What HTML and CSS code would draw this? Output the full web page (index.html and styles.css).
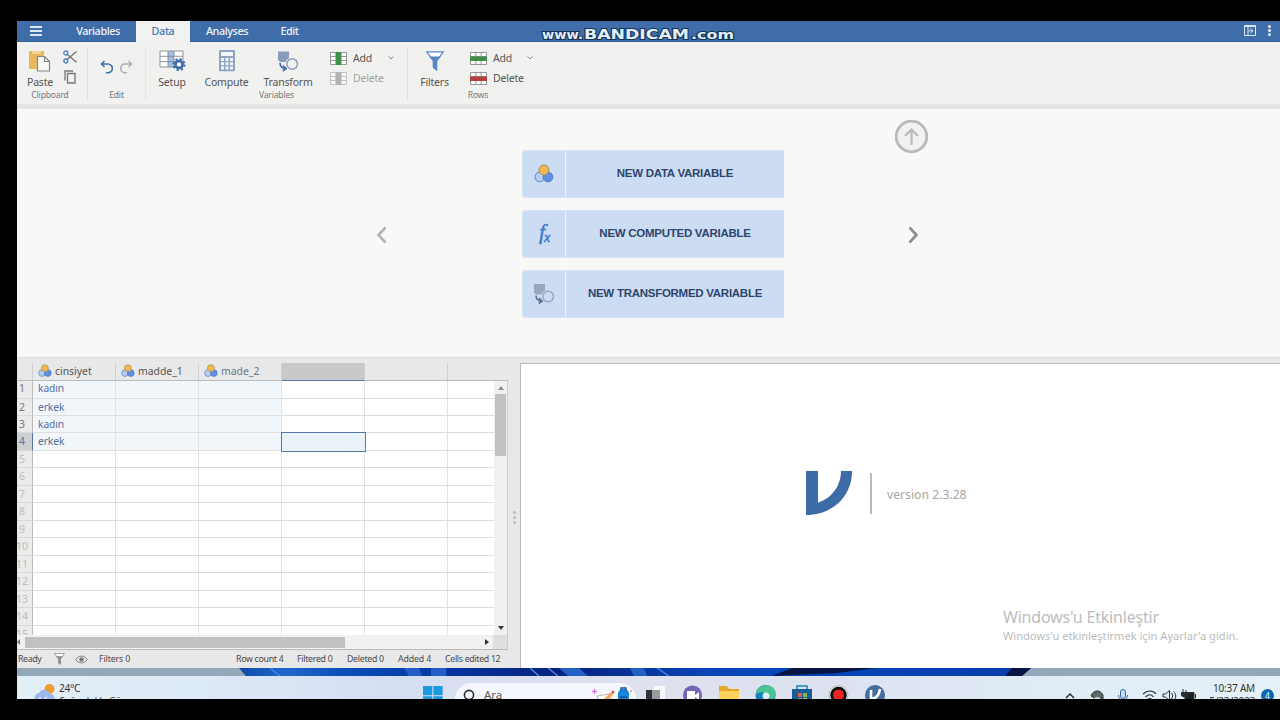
FILE: index.html
```html
<!DOCTYPE html>
<html lang="tr">
<head>
<meta charset="utf-8">
<title>jamovi</title>
<link rel="stylesheet" href="styles.css">
</head>
<body>
<svg width="0" height="0" class="defs">
  <defs>
    <symbol id="nominal" viewBox="0 0 20 20">
      <circle cx="5.8" cy="13" r="4.8" fill="#b5cdf2" stroke="#5a83c4"/>
      <circle cx="14" cy="13" r="4.8" fill="#5d8fe3" stroke="#4878c4"/>
      <circle cx="9.9" cy="6" r="5" fill="#f3b751" stroke="#a78b62"/>
    </symbol>
    <symbol id="transform" viewBox="0 0 22 21">
      <path d="M1 1h11v6.5a7 7 0 0 0-3.5 4H3L1 9.500z" fill="currentColor" stroke="none"/>
      <circle cx="15.200" cy="13.500" r="5.300" fill="none" stroke="currentColor" stroke-width="1.500"/>
      <path d="M3 12.500c.3 3.300 1.800 5.300 5 5.600M6 15.200l3 3-3.200 2.300" fill="none" stroke-width="1.700"/>
    </symbol>
    <symbol id="sheet" viewBox="0 0 17 13">
      <path d="M.5.5h16v12H.5zM.5 4.500h16M.5 8.500h16M5.800.5v12M11.200.5v12" fill="#fff" stroke="#8b8b8b" stroke-width=".9"/>
    </symbol>
    <symbol id="funnel" viewBox="0 0 18 20">
      <path d="M.8.8h16.400L10.700 10v9l-3.400-2.500V10z" fill="#fff" stroke="currentColor" stroke-width="1.200"/>
      <path d="M3 5.500h12L10.700 10v9l-3.400-2.500V10z" fill="currentColor"/>
    </symbol>
  </defs>
</svg>
<div class="screen">
  <header class="tabs">
    <div class="burger"><i></i><i></i><i></i></div>
    <div class="tab t-var">Variables</div>
    <div class="tab t-data active">Data</div>
    <div class="tab t-ana">Analyses</div>
    <div class="tab t-edit">Edit</div>
    <svg class="brand" width="202" height="20" viewBox="0 0 202 20">
      <g class="brandtext">
        <text x="5" y="16" font-size="11.500" textLength="41" lengthAdjust="spacingAndGlyphs">www.</text>
        <text x="47" y="16" font-size="14" textLength="105" lengthAdjust="spacingAndGlyphs">BANDICAM</text>
        <text x="154" y="16" font-size="11.500" textLength="43" lengthAdjust="spacingAndGlyphs">.com</text>
      </g>
    </svg>
    <svg class="dock" width="12" height="11" viewBox="0 0 12 11"><path d="M.5.5h11v10H.5zM.5 1.500h11M4 1v9M6.500 3.500L9 5.800 6.500 8M4.500 5.800H9" fill="none" stroke="#dce8f6"/></svg>
    <div class="dots"><i></i><i></i><i></i></div>
  </header>

  <section class="ribbon">
    <div class="group g-clip">
      <div class="tools">
        <div class="big w-paste">
          <svg width="22" height="22" viewBox="0 0 22 22"><path d="M0 1h15v18H0z" fill="#e9b85c"/><path d="M3 1h9v3H3z" fill="#f4d596"/><path d="M8.500 6.500h7l5 5v9.500h-12zM15.500 6.500v5h5" fill="#f7f7f7" stroke="#858585" stroke-width="1.200"/></svg>
          <span>Paste</span>
        </div>
        <div class="stack">
          <svg width="14" height="14" viewBox="0 0 14 14" fill="none"><path d="M13.500 1.500L4.300 9.200M4.300 4.500l9.200 7.700" stroke="#777" stroke-width="1.400"/><circle cx="2.800" cy="3" r="2" stroke="#4d80be" stroke-width="1.300"/><circle cx="2.800" cy="11" r="2" stroke="#4d80be" stroke-width="1.300"/></svg>
          <svg width="12" height="14" viewBox="0 0 12 14" fill="none" stroke="#777" stroke-width="1.300"><path d="M3.500 3.500h7.500v9.500H3.500z"/><path d="M1 10.500V1h8"/></svg>
        </div>
      </div>
      <div class="caption">Clipboard</div>
    </div>
    <div class="group g-edit">
      <div class="tools undo">
        <svg width="13" height="14" viewBox="0 0 13 14" fill="none" stroke="#416fae" stroke-width="1.600"><path d="M1.500 4H8a4.300 4.300 0 0 1 0 8.700H6M4.500 1l-3 3 3 3"/></svg>
        <svg width="13" height="14" viewBox="0 0 13 14" fill="none" stroke="#b0b0b0" stroke-width="1.500"><path d="M11.500 4H5a4.300 4.300 0 0 0 0 8.700h2M8.500 1l3 3-3 3"/></svg>
      </div>
      <div class="caption">Edit</div>
    </div>
    <div class="group g-vars">
      <div class="tools">
        <div class="big w-setup">
          <svg width="27" height="22" viewBox="0 0 27 22"><path d="M1 1h23v16H1z" fill="#fff"/><path d="M9 1h6v16H9z" fill="#9fbef0"/><path d="M1 1h23v16H1zM1 6.300h23M1 11.600h23M9 1v16M15 1v16" fill="none" stroke="#888" stroke-width=".9"/><circle cx="20" cy="14.500" r="3.500" fill="none" stroke="#3f6cab" stroke-width="2.600"/><circle cx="20" cy="14.500" r="5.500" fill="none" stroke="#3f6cab" stroke-width="2" stroke-dasharray="2.200 2.120"/><circle cx="20" cy="14.500" r="1.700" fill="#fff"/></svg>
          <span>Setup</span>
        </div>
        <div class="big w-comp">
          <svg width="16" height="22" viewBox="0 0 16 22"><path d="M.7.7h14.600v20H.7z" fill="#92a5c6" stroke="#7f96bd"/><path d="M2 2h12v4H2zM2 8h3v3H2zM6.500 8h3v3h-3zM11 8h3v3h-3zM2 12.300h3v3H2zM6.500 12.300h3v3h-3zM11 12.300h3v3h-3zM2 16.500h3v3H2zM6.500 16.500h3v3h-3zM11 16.500h3v3h-3z" fill="#f4f6fa"/></svg>
          <span>Compute</span>
        </div>
        <div class="big w-trans">
          <svg class="tr-blue" width="22" height="22"><use href="#transform"/></svg>
          <span>Transform</span>
        </div>
        <div class="list">
          <div class="small"><svg width="17" height="13"><use href="#sheet"/><path d="M6 0h5v13H6z" fill="#3e8f47"/></svg><span>Add</span><svg class="caret" width="6" height="4" viewBox="0 0 6 4"><path d="M.5.5L3 3 5.500.5" fill="none" stroke="#888"/></svg></div>
          <div class="small off"><svg width="17" height="13"><use href="#sheet"/><path d="M6 0h5v13H6z" fill="#777"/></svg><span>Delete</span></div>
        </div>
      </div>
      <div class="caption">Variables</div>
    </div>
    <div class="group g-rows">
      <div class="tools">
        <div class="big w-filt">
          <svg class="f-blue" width="18" height="22"><use href="#funnel"/></svg>
          <span>Filters</span>
        </div>
        <div class="list">
          <div class="small"><svg width="17" height="13"><use href="#sheet"/><path d="M0 4.500h17v4.500H0z" fill="#3e8f47"/></svg><span>Add</span><svg class="caret" width="6" height="4" viewBox="0 0 6 4"><path d="M.5.5L3 3 5.500.5" fill="none" stroke="#888"/></svg></div>
          <div class="small"><svg width="17" height="13"><use href="#sheet"/><path d="M0 4.500h17v4.500H0z" fill="#b5403f"/></svg><span>Delete</span></div>
        </div>
      </div>
      <div class="caption">Rows</div>
    </div>
  </section>

  <section class="panel">
    <svg class="prev" width="12" height="18" viewBox="0 0 12 18"><path d="M9.500 1.500L2.500 9l7 7.500" fill="none" stroke="#b3b3b3" stroke-width="2.600"/></svg>
    <div class="choices">
      <div class="choice"><div class="pic"><svg width="20" height="20"><use href="#nominal"/></svg></div><div class="name"><span>NEW DATA VARIABLE</span></div></div>
      <div class="choice"><div class="pic fx"><svg width="18" height="28" viewBox="0 0 18 28"><text x="4" y="19" font-size="22">f</text><text x="9" y="22" font-size="14">x</text></svg></div><div class="name"><span>NEW COMPUTED VARIABLE</span></div></div>
      <div class="choice"><div class="pic tr-gray"><svg width="22" height="21"><use href="#transform"/></svg></div><div class="name"><span>NEW TRANSFORMED VARIABLE</span></div></div>
    </div>
    <div class="side">
      <svg width="34" height="34" viewBox="0 0 34 34" fill="none" stroke="#b9b9b9"><circle cx="16.500" cy="16.500" r="15.300" fill="#f1f1f1" stroke-width="2.800"/><path d="M16.500 25V9.500M10 16l6.500-6.500L23 16" stroke-width="2.200"/></svg>
      <svg class="next" width="12" height="18" viewBox="0 0 12 18"><path d="M2.500 1.500L9.500 9l-7 7.500" fill="none" stroke="#8e8e8e" stroke-width="2.600"/></svg>
    </div>
  </section>

  <section class="work">
    <div class="data">
      <div class="heads">
        <div class="corner"></div>
        <div class="head"><svg width="14" height="14"><use href="#nominal"/></svg>cinsiyet</div>
        <div class="head"><svg width="14" height="14"><use href="#nominal"/></svg>madde_1</div>
        <div class="head made"><svg width="14" height="14"><use href="#nominal"/></svg>made_2</div>
        <div class="head sel"></div>
        <div class="head"></div>
        <div class="head last"></div>
      </div>
      <div class="body">
        <div class="cells">
          <div class="row full first"><b>1</b><i>kadın</i><i></i><i></i><i></i><i></i></div>
          <div class="row full"><b>2</b><i>erkek</i><i></i><i></i><i></i><i></i></div>
          <div class="row full"><b>3</b><i>kadın</i><i></i><i></i><i></i><i></i></div>
          <div class="row full current"><b>4</b><i>erkek</i><i></i><i></i><i class="cursor"></i><i></i></div>
          <div class="row"><b>5</b><i></i><i></i><i></i><i></i><i></i></div>
          <div class="row"><b>6</b><i></i><i></i><i></i><i></i><i></i></div>
          <div class="row"><b>7</b><i></i><i></i><i></i><i></i><i></i></div>
          <div class="row"><b>8</b><i></i><i></i><i></i><i></i><i></i></div>
          <div class="row"><b>9</b><i></i><i></i><i></i><i></i><i></i></div>
          <div class="row"><b>10</b><i></i><i></i><i></i><i></i><i></i></div>
          <div class="row"><b>11</b><i></i><i></i><i></i><i></i><i></i></div>
          <div class="row"><b>12</b><i></i><i></i><i></i><i></i><i></i></div>
          <div class="row"><b>13</b><i></i><i></i><i></i><i></i><i></i></div>
          <div class="row"><b>14</b><i></i><i></i><i></i><i></i><i></i></div>
          <div class="row"><b>15</b><i></i><i></i><i></i><i></i><i></i></div>
        </div>
        <div class="vbar">
          <svg width="6" height="4" viewBox="0 0 6 4"><path d="M0 4l3-4 3 4z" fill="#8a8a8a"/></svg>
          <div class="vthumb"></div>
          <svg width="6" height="4" viewBox="0 0 6 4"><path d="M0 0l3 4 3-4z" fill="#333"/></svg>
        </div>
      </div>
      <div class="hbar">
        <svg width="4" height="6" viewBox="0 0 4 6"><path d="M3 0v6L0 3z" fill="#777"/></svg>
        <div class="hthumb"></div>
        <svg class="right" width="4" height="6" viewBox="0 0 4 6"><path d="M0 0v6l4-3z" fill="#333"/></svg>
        <div class="hcorner"></div>
      </div>
      <div class="status">
        <span class="s-ready">Ready</span>
        <svg class="s-fun" width="11" height="12" viewBox="0 0 18 20"><use href="#funnel"/></svg>
        <svg class="s-eye" width="13" height="9" viewBox="0 0 13 9"><path d="M.7 4.500C3.500 0 9.500 0 12.300 4.500 9.500 9 3.500 9 .7 4.500z" fill="none" stroke="#858585"/><circle cx="6.500" cy="4.500" r="2.200" fill="#777"/></svg>
        <span class="s-filters">Filters 0</span>
        <span class="s-rows">Row count 4</span>
        <span class="s-filtered">Filtered 0</span>
        <span class="s-deleted">Deleted 0</span>
        <span class="s-added">Added 4</span>
        <span class="s-cells">Cells edited 12</span>
      </div>
      <div class="grip"><i></i><i></i><i></i></div>
    </div>
    <div class="results">
      <div class="about">
        <svg width="47" height="45" viewBox="0 0 47 45"><path d="M0 0h12v31.500C25 28 35 15 35 0h11C46 26 26 44 0 44z" fill="#3c6ba6"/></svg>
        <div class="rule"></div>
        <span>version 2.3.28</span>
      </div>
      <div class="activate">
        <div class="a1"><span>Windows'u Etkinleştir</span></div>
        <div class="a2"><span>Windows'u etkinleştirmek için Ayarlar'a gidin.</span></div>
      </div>
    </div>
  </section>

  <svg class="wall" width="1264" height="8" viewBox="0 0 1264 8">
    <defs><linearGradient id="sky"><stop offset="0" stop-color="#0d49a8"/><stop offset=".06" stop-color="#2068cb"/><stop offset=".13" stop-color="#0850b8"/><stop offset=".24" stop-color="#0639a8"/><stop offset=".4" stop-color="#06207d"/><stop offset=".58" stop-color="#0a43b4"/><stop offset=".7" stop-color="#0546bd"/><stop offset="1" stop-color="#0b3cab"/></linearGradient></defs>
    <path d="M0 0h1264v8H0z" fill="#93a8b8"/>
    <path d="M222 0h792l-9 8H229z" fill="url(#sky)"/>
    <path d="M253 0l10 8M513 0l9 8M531 0l10 8M640 0l12 8" stroke="#4389e1" stroke-width="1.500"/>
    <path d="M387 0h15l3 8h-13zM414 0h15v8h-15zM542 0h20l9 8h-20zM613 0h14l3 8h-13z" fill="#245fc5"/>
    <path d="M775 0h85l-40 5-65 3z" fill="#06153f"/>
    <path d="M995 0h19l-9 8h-17z" fill="#071544"/>
  </svg>

  <footer class="taskbar">
    <svg class="weather" width="22" height="16" viewBox="0 0 22 16"><circle cx="15.500" cy="5" r="5" fill="#f29a2e"/><path d="M1 16a5 5 0 0 1 4-7 6 6 0 0 1 11 1 4 4 0 0 1 4 6z" fill="#9db9ec"/><path d="M5 16l1.500-3M11 16l1.500-3" stroke="#e8f1ff" stroke-width="1.500"/></svg>
    <div class="temp"><div class="deg">24°C</div><div class="cond">Çoğunlukla Güneş</div></div>
    <svg class="start" width="20" height="20" viewBox="0 0 20 20"><path d="M0 0h9.300v9.300H0zM10.300 0h9.300v9.300h-9.300zM0 10.300h9.300V20H0zM10.300 10.300h9.300V20h-9.300z" fill="#199ae2"/></svg>
    <div class="search">
      <svg class="lens" width="14" height="17" viewBox="0 0 14 17"><circle cx="7" cy="6" r="4.600" fill="none" stroke="#252a32" stroke-width="1.600"/><path d="M10 10l3.500 4" stroke="#252a32" stroke-width="1.600"/></svg>
      <span>Ara</span>
      <svg class="art" width="40" height="16" viewBox="0 0 40 16"><path d="M2.500 2v5M0 4.500h5" stroke="#d77bdd" stroke-width="1.300"/><path d="M5 9l12-2 4 9H8z" fill="#fff8ed" stroke="#aaa" stroke-width=".8"/><path d="M12 12l7-7 3 1-6 7z" fill="#eda55e"/><path d="M20 4l2 2" stroke="#dc4c55" stroke-width="2"/><rect x="26" y="2" width="11" height="14" rx="5" fill="#1786dd"/><path d="M29 4V1h5v3M28 10h7" fill="none" stroke="#0c5399" stroke-width="1.300"/><circle cx="39" cy="4" r="1" fill="#ed9b58"/></svg>
    </div>
    <svg class="apps" width="242" height="20" viewBox="0 0 242 20">
      <path d="M8 1h11v14H8z" fill="#f7f8f9"/><path d="M0 5h14v15H0z" fill="#303136"/><path d="M6 5h8v15H6z" fill="#999"/>
      <circle cx="46.500" cy="10" r="9.500" fill="#7165b5"/><path d="M41 6h8v9h-8zM49 10l4-3v8l-4-3z" fill="#fff"/>
      <path d="M73 1h8l2 3h10v16H73z" fill="#e7a827"/><path d="M73 6h20v14H73z" fill="#ffd35b"/>
      <circle cx="119.500" cy="10" r="10" fill="#157fc4"/><path d="M110 9c1-11 19-12 20 0 0 5-5 6-8 4 1-4-5-8-12-4z" fill="#4bc58f"/><circle cx="120" cy="11" r="3.500" fill="#d7f2fb"/>
      <path d="M151 5V1h10v4" fill="none" stroke="#1a85bb" stroke-width="1.500"/><path d="M146 4h20v16h-20z" fill="#195d96"/><path d="M152 8h4v4h-4z" fill="#ed5b37"/><path d="M157 8h4v4h-4z" fill="#7bbd4b"/><path d="M152 13h4v4h-4z" fill="#3fa9e2"/><path d="M157 13h4v4h-4z" fill="#f2c444"/>
      <circle cx="192.500" cy="10" r="9.500" fill="#ececec" stroke="#b9b9b9"/><circle cx="192.500" cy="10" r="8.200" fill="#0b0b0b"/><circle cx="192.500" cy="10" r="5.500" fill="#ea2524"/>
      <circle cx="229" cy="10" r="10" fill="#426f9f"/><path d="M225 5v9c5 0 8-4 9-10" fill="none" stroke="#fff" stroke-width="2.600"/>
    </svg>
    <svg class="tray" width="132" height="16" viewBox="0 0 132 16" fill="none" stroke="#2a2f36">
      <path d="M1 10l4-4 4 4" stroke-width="1.500"/>
      <path d="M26 8c2-6 9-7 12-1v4l-4-2-3 3-3-3z" fill="#60686a"/><path d="M28 12c1-4 7-4 8-1v4h-8z" fill="#e3e6df" stroke="#777"/>
      <rect x="55.500" y="1.500" width="5" height="9" rx="2.500" fill="#c8dbf5" stroke="#3768aa"/><path d="M53.500 7c0 7 9 7 9 0M58 13v3" stroke="#3768aa"/>
      <path d="M78 6c4-4 10-4 13 0M80.500 9c3-3 6-3 8 0M82.500 11.500c1.500-1 3-1 4 0" stroke-width="1.200"/>
      <path d="M98 6h2.500l4-3.500v10l-4-3.500H98zM106.500 5c1.500 1.500 1.500 4 0 6M108.500 3.500c3 2.500 3 6.500 0 9"/>
      <path d="M120 4.500h9v7h-9z" fill="#222"/><path d="M130.500 6v4M118 1v4M121 2v3M116.500 4.500h6v3c0 2-5 2-6 0z" fill="#2a2f36"/>
    </svg>
    <div class="clock"><div>10:37 AM</div><div class="date">5/23/2023</div></div>
    <div class="badge">4</div>
  </footer>
</div>
</body>
</html>
```
FILE: styles.css
```css
* { box-sizing: border-box; }
body { margin: 0; width: 1280px; height: 720px; overflow: hidden; background: #000; padding: 21px 0 0 17px; font-family: "Noto Sans", "Open Sans", sans-serif; font-size: 10.5px; color: #555; }
.defs { display: block; }
.screen { width: 1263px; height: 678px; overflow: hidden; background: #e8e8e8; display: flex; flex-direction: column; }
svg { display: block; flex: none; }
span { white-space: nowrap; }

.tabs { height: 21px; flex: none; background: #3e6da9; color: #eef4fb; display: flex; align-items: center; font-weight: 500; border-bottom: 1px solid #356199; }
.burger { width: 38px; flex: none; padding-left: 13px; display: flex; flex-direction: column; gap: 2px; }
.burger i { width: 12px; height: 2px; background: #dce7f4; }
.tab { height: 21px; flex: none; line-height: 20px; text-align: center; font-size: 10.8px; letter-spacing: -.4px; }
.t-var { width: 81px; padding-left: 5px; }
.t-data { width: 54px; }
.t-ana { width: 74px; }
.t-edit { width: 51px; }
.active { background: #f2f2f2; color: #4c74ab; }
.brand { margin-left: 222px; margin-top: 3px; }
.brandtext { font-family: "DejaVu Sans", sans-serif; font-weight: bold; fill: #e2effa; stroke: #153456; stroke-width: 2px; paint-order: stroke; }
.dock { margin-left: 505px; margin-top: -2px; }
.dots { margin-left: 12px; margin-top: -1px; display: flex; flex-direction: column; gap: 1px; }
.dots i { width: 3px; height: 3px; border-radius: 50%; background: #eef4fb; }

.ribbon { height: 62px; flex: none; background: #f1f1f0; display: flex; padding-top: 5px; }
.group { height: 53px; border-right: 1px solid #e2e2e2; }
.group:last-child { border: 0; }
.g-clip { width: 71px; }
.g-edit { width: 58px; }
.g-vars { width: 262px; }
.g-rows { width: 140px; }
.tools { height: 42px; display: flex; }
.caption { font-size: 8.5px; line-height: 12px; text-align: center; color: #777; letter-spacing: -.15px; }
.g-clip .caption { padding-right: 4px; }
.big { height: 42px; padding-top: 3px; display: flex; flex-direction: column; align-items: center; line-height: 14px; gap: 3px; letter-spacing: -.2px; }
.w-paste { width: 46px; }
.w-setup { width: 52px; }
.w-comp { width: 57px; }
.w-trans { width: 66px; }
.w-filt { width: 53px; }
.stack { display: flex; flex-direction: column; gap: 6px; padding-top: 3px; align-items: center; }
.undo { justify-content: center; gap: 7px; padding-top: 13px; }
.tr-blue { color: #8b9cba; stroke: #3f6cab; }
.tr-gray { color: #98a5ba; stroke: #58718f; }
.f-blue { color: #5487c4; }
.list { padding: 1px 0 0 9px; }
.small { height: 20px; display: flex; align-items: center; letter-spacing: -.2px; }
.small span { margin-left: 6px; width: 33px; }
.off { opacity: .5; }
.caret { margin-left: 2px; }
.g-rows .caret { margin-left: 1px; }

.panel { height: 254px; flex: none; background: #f8f8f8; border-top: 5px solid #e6e6e5; border-bottom: 1px solid #ddd; display: grid; grid-template-columns: 359px 146px 262px 111px 34px; }
.prev { grid-column: 2; margin-top: 117px; }
.choices { padding-top: 41px; display: flex; flex-direction: column; gap: 12px; }
.choice { height: 48px; display: grid; grid-template-columns: 43px 218px; border-radius: 3px 0 0 3px; overflow: hidden; background: #ccddf3; border: 1px solid #d7e5f6; border-right: 0; }
.pic { border-right: 1px solid #eaf2fd; display: flex; align-items: center; justify-content: center; padding-bottom: 1px; }
.name { display: flex; align-items: center; justify-content: center; padding-bottom: 2px; font: bold 11.5px "Liberation Sans", sans-serif; letter-spacing: -.27px; color: #2d466e; }
.fx { font-family: "Liberation Serif", serif; font-style: italic; fill: #4279d0; stroke: #4279d0; stroke-width: .5px; }
.side { grid-column: 5; padding-top: 11px; }
.next { margin: 72px 0 0 12px; }

.work { height: 310px; flex: none; display: flex; }
.data { width: 503px; padding-top: 5px; position: relative; }
.heads { height: 18px; display: flex; border-bottom: 1px solid #bbb; width: 491px; }
.corner { width: 16px; border-right: 1px solid #d0d0d0; flex: none; }
.head { width: 83px; flex: none; border-right: 1px solid #d0d0d0; display: flex; align-items: center; gap: 3px; padding-left: 5px; font-size: 10.4px; line-height: 14px; padding-bottom: 1px; color: #555; }
.made { color: #67778c; }
.head.sel { background: #c9c9c9; border-bottom: 1px solid #557ba8; height: 18px; }
.head.last { width: 59px; border: 0; }
.body { height: 254px; display: flex; }
.cells { width: 477px; background: #fff; overflow: hidden; }
.row { height: 17.470px; display: grid; grid-template-columns: 16px 83px 83px 83px 83px 83px 46px; line-height: 16px; }
.row.first { height: 17.500px; line-height: 15px; }
.row b { font-weight: normal; font-size: 10.5px; background: #ebebeb; color: #bcbcbc; border-right: 1px solid #bbb; border-bottom: 1px solid #d8d8d8; padding-right: 5px; display: flex; justify-content: center; }
.row i { font-style: normal; border-right: 1px solid #e3e3e3; border-bottom: 1px solid #dedede; padding-left: 5px; color: #576f9f; font-size: 10.3px; letter-spacing: -.1px; }
.row::after { content: ""; border-bottom: 1px solid #dedede; }
.full b { color: #777; }
.full i:nth-of-type(-n+3) { background: #f1f6fa; }
.current b { background: #ccd0d0; color: #5975a4; border-right: 1px solid #5275a8; }
.current .cursor { background: #ebf3fa; border: 0; outline: 1.500px solid #547aa8; margin: 0 0 0 0; position: relative; }
.vbar { width: 14px; background: #f0f0f0; border-right: 1px solid #ccc; display: flex; flex-direction: column; align-items: center; padding: 5px 0; }
.vthumb { width: 11px; height: 62px; background: #c1c1c1; margin: 4px 0 auto; }
.hbar { width: 491px; height: 15px; background: #f1f1f1; display: flex; align-items: center; border-bottom: 1px solid #bbb; }
.hthumb { width: 320px; height: 11px; background: #c1c1c1; margin-left: 4px; }
.right { margin-left: 140px; }
.hcorner { width: 15px; height: 14px; background: #dedede; margin-left: auto; border-right: 1px solid #ccc; }
.status { height: 18px; display: flex; align-items: center; font-size: 8.8px; letter-spacing: -.15px; color: #4a4a4a; }
.s-ready { width: 36px; padding-left: 1px; letter-spacing: -.4px; }
.s-fun { color: #888; margin-left: 1px; }
.s-eye { margin-left: 10px; }
.s-filters { margin-left: 11px; width: 137px; }
.s-rows { width: 61px; letter-spacing: -.3px; }
.s-filtered { width: 50px; letter-spacing: -.3px; }
.s-deleted { width: 51px; letter-spacing: -.3px; }
.s-added { width: 47px; }
.s-cells { letter-spacing: -.32px; }
.grip { position: absolute; right: 4px; top: 153px; display: flex; flex-direction: column; gap: 2px; }
.grip i { width: 3px; height: 3px; border-radius: 50%; background: #bbb; }
.results { width: 760px; margin-top: 5px; background: #fff; border-left: 1px solid #bbb; border-top: 1px solid #bbb; }
.about { padding: 107px 0 0 285px; display: flex; align-items: center; height: 152px; color: #a5a5a5; font-size: 12.2px; }
.rule { width: 2px; height: 41px; background: #b9b9b9; margin: 0 15px 0 17px; }
.about span { padding-top: 1px; }
.activate { padding: 91px 0 0 482px; color: #bcbcbc; line-height: 20px; }
.a1 { font-size: 16px; letter-spacing: -.2px; height: 20px; }
.a2 { font-size: 11.1px; line-height: 17px; }

.wall { height: 8px; }
.taskbar { height: 23px; flex: none; overflow: hidden; display: flex; align-items: flex-start; background: linear-gradient(90deg, #e3f0f8, #dce9f7 15%, #d5def2 30%, #dfe1ee 50%, #dce2f1 65%, #e1eef7 85%, #e5f0f7); color: #333; }
.weather { margin: 8px 0 0 17px; }
.temp { width: 369px; flex: none; padding-left: 3px; padding-top: 6px; }
.deg { font-size: 10.2px; line-height: 13px; letter-spacing: -.3px; }
.cond { font-size: 9px; line-height: 12px; }
.start { margin: 10px 0 0 -2px; }
.search { width: 181px; flex: none; height: 32px; margin: 7px 0 0 12px; border-radius: 16px; background: #f4f8fe; display: flex; align-items: flex-start; padding-left: 7px; font-size: 11.5px; color: #555; }
.lens { margin-top: 6px; }
.search span { margin: 4px 0 0 8px; }
.art { margin: 4px 0 0 90px; }
.apps { margin: 9px 0 0 10px; }
.tray { margin: 12px 0 0 177px; }
.clock { width: 58px; flex: none; padding-top: 6px; line-height: 13px; text-align: right; font-size: 10px; letter-spacing: -.2px; }
.badge { width: 13px; height: 13px; flex: none; margin: 13px 0 0 6px; border-radius: 50%; background: #0968b2; color: #fff; font-size: 8.5px; line-height: 13px; text-align: center; }
```
